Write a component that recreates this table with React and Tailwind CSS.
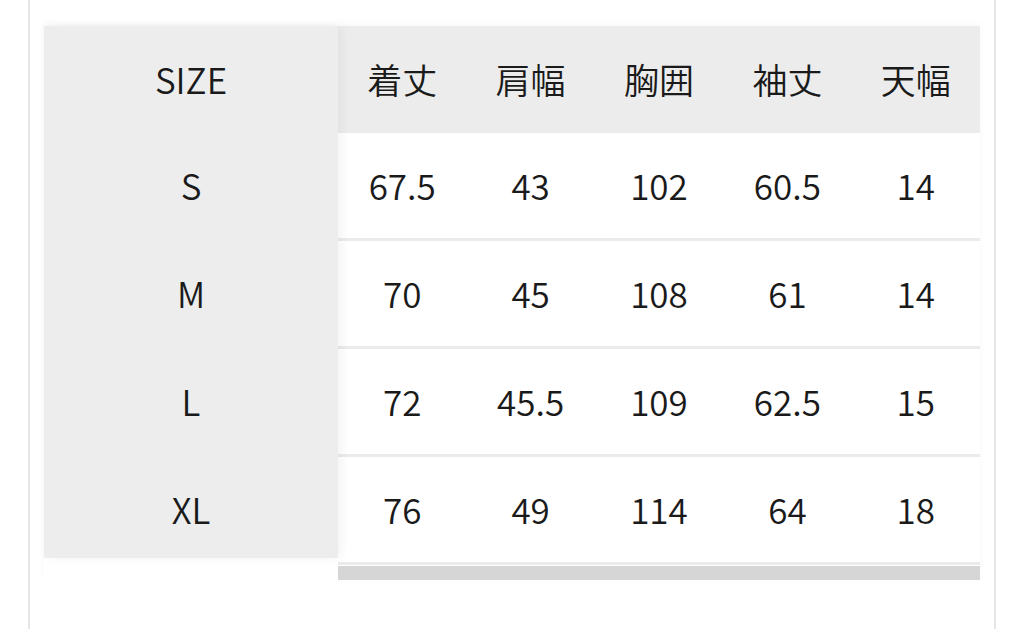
import React from "react";

const heads = ["着丈", "肩幅", "胸囲", "袖丈", "天幅"];
const rows = [
  ["S", "67.5", "43", "102", "60.5", "14"],
  ["M", "70", "45", "108", "61", "14"],
  ["L", "72", "45.5", "109", "62.5", "15"],
  ["XL", "76", "49", "114", "64", "18"],
];

export default function App() {
  return (
    <div
      className="w-[1024px] h-[629px] bg-white overflow-hidden text-[#1a1a1a]"
      style={{ fontFamily: '"Noto Sans CJK JP", "Noto Sans", sans-serif' }}
    >
      <div className="ml-[28px] w-[968px] h-[629px] border-x-[2px] border-[#e6e6e6] pt-[26px] px-[14px]">
        <div className="flex shadow-[0_-2px_8px_rgba(0,0,0,0.03)]">
          <div className="relative z-10 w-[294px] h-[532px] overflow-hidden bg-[#ededed] shadow-[3px_0_10px_rgba(0,0,0,0.05)] flex flex-col">
            <div className="h-[107px] shrink-0 flex items-center justify-center text-[35px] font-[350] leading-none pb-[3px]">
              SIZE
            </div>
            {rows.map((r) => (
              <div
                key={r[0]}
                className="h-[108px] shrink-0 flex items-center justify-center text-[35px] font-[350] leading-none pb-[5px]"
              >
                {r[0]}
              </div>
            ))}
          </div>
          <div className="w-[642px] flex flex-col">
            <div className="h-[107px] bg-[#ececec] grid grid-cols-5">
              {heads.map((h) => (
                <div key={h} className="flex items-center justify-center text-[35px] font-[350] leading-none pb-[3px]">
                  {h}
                </div>
              ))}
            </div>
            {rows.map((r) => (
              <div
                key={r[0]}
                className="h-[108px] grid grid-cols-5 border-b-[3px] border-[#ebebeb]"
              >
                {r.slice(1).map((v, i) => (
                  <div key={i} className="flex items-center justify-center text-[35px] font-[350] leading-none pb-[2px]">
                    {v}
                  </div>
                ))}
              </div>
            ))}
            <div className="mt-[1px] h-[14px] bg-[#d6d6d6]" />
          </div>
        </div>
      </div>
    </div>
  );
}
